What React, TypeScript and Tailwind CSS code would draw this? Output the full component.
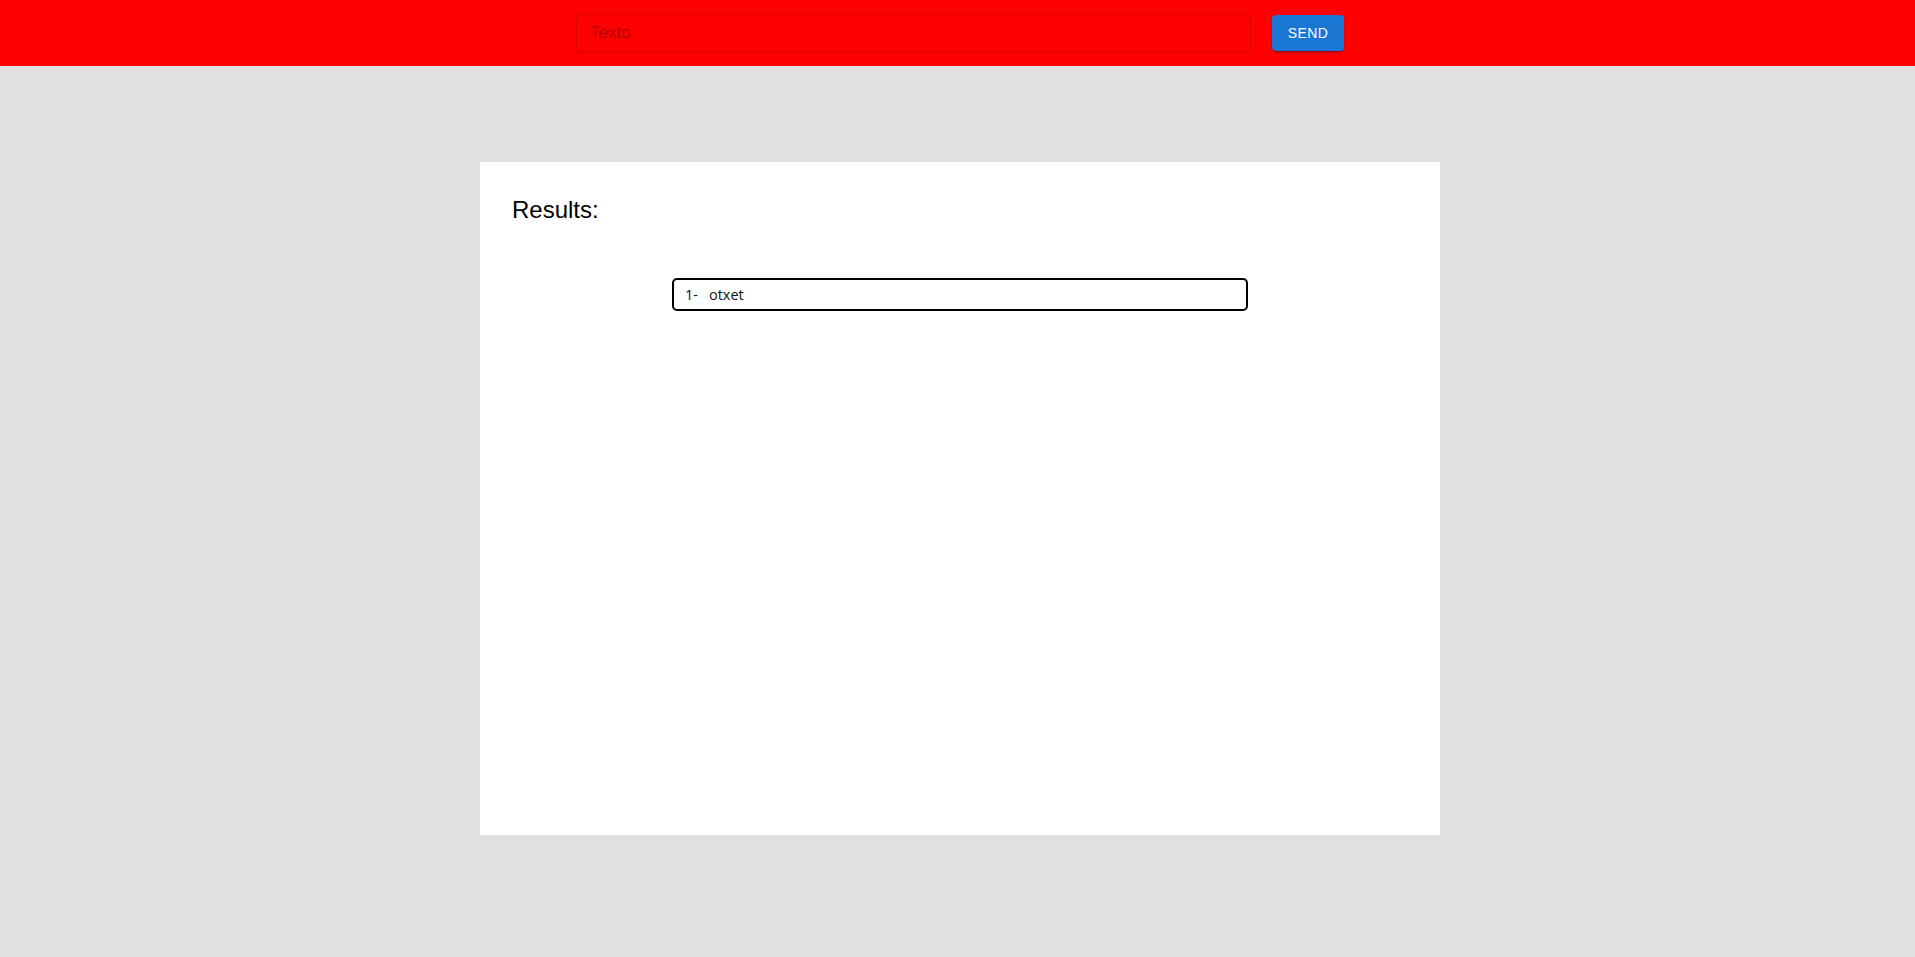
export default function App() {
  return (
    <div className="min-h-[957px] bg-[#e0e0e0] font-['Liberation_Sans',Arial,sans-serif]">
      <header className="flex h-[66px] items-center justify-center gap-[21px] bg-[#ff0000] pl-[5px]">
        <input
          type="text"
          placeholder="Texto"
          className="h-[39px] w-[675px] rounded-[4px] border border-[#d80000] bg-transparent px-[13px] text-[17px] text-black outline-none placeholder:text-[#b30000]"
        />
        <button
          type="button"
          className="h-[36px] w-[72px] rounded-[4px] bg-[#1976d2] text-[14px] uppercase tracking-[0.4px] text-white shadow-[0_3px_1px_-2px_rgba(0,0,0,0.2),0_2px_2px_0_rgba(0,0,0,0.14),0_1px_5px_0_rgba(0,0,0,0.12)]"
        >
          Send
        </button>
      </header>

      <main className="flex justify-center pl-[5px] pt-[96px]">
        <section className="h-[673px] w-[960px] bg-white px-[32px] pt-[32px]">
          <h2 className="text-[24px] leading-[32px] text-black">Results:</h2>
          <ul className="mt-[52px] flex flex-col items-center gap-2">
            <li className="flex h-[33px] w-[576px] items-center rounded-[5px] border-2 border-black px-[11px] font-['Open_Sans',sans-serif] text-[14.5px] text-[#111]">
              <span>1-</span>
              <span className="ml-[11px]">otxet</span>
            </li>
          </ul>
        </section>
      </main>
    </div>
  );
}
